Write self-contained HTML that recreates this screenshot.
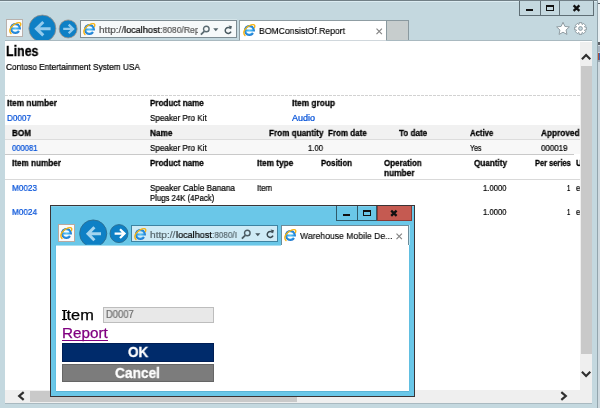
<!DOCTYPE html>
<html><head><meta charset="utf-8"><title>BOMConsistOf.Report</title>
<style>
html,body{margin:0;padding:0;}
body{width:600px;height:408px;overflow:hidden;position:relative;background:#c4d8df;font-family:"Liberation Sans",sans-serif;}
.a{position:absolute;}
.t{position:absolute;white-space:nowrap;transform-origin:0 0;will-change:transform;-webkit-text-stroke:0.24px currentColor;}
.t.b{-webkit-text-stroke:0.3px currentColor;}
svg{position:absolute;overflow:visible;}
</style></head><body>

<!-- ===== main window frame ===== -->
<div class="a" style="left:0;top:0;width:598px;height:1px;background:#717f86;"></div>
<div class="a" style="left:0;top:1px;width:597px;height:1px;background:#dcecf2;"></div>
<div class="a" style="left:597px;top:0;width:1px;height:408px;background:#93a5ad;"></div>
<!-- outside strip -->
<div class="a" style="left:598px;top:0;width:2px;height:408px;background:#cfdae0;"></div>
<div class="a" style="left:598px;top:0;width:2px;height:42px;background:#eaf1f4;"></div>
<div class="a" style="left:598px;top:2.5px;width:2px;height:1.2px;background:#5a6268;"></div>
<div class="a" style="left:598px;top:42.3px;width:2px;height:2.4px;background:#5c6066;"></div>
<div class="a" style="left:598px;top:44.7px;width:2px;height:1.5px;background:#d5dce2;"></div>
<div class="a" style="left:598px;top:46.2px;width:2px;height:6.3px;background:#a9b5c1;"></div>
<div class="a" style="left:598px;top:52.5px;width:1px;height:7px;background:#b85030;"></div>
<div class="a" style="left:599px;top:52.5px;width:1px;height:7px;background:#3565c0;"></div>
<div class="a" style="left:598px;top:59.5px;width:2px;height:2px;background:#9aa6b0;"></div>
<!-- window control buttons -->
<div class="a" style="left:519px;top:1px;width:75px;height:15px;border:1px solid #5f6e75;border-top:none;box-sizing:border-box;background:#c4d8df;"></div>
<div class="a" style="left:540px;top:1px;width:1px;height:15px;background:#5f6e75;"></div>
<div class="a" style="left:559px;top:1px;width:1px;height:15px;background:#5f6e75;"></div>
<div class="a" style="left:525.5px;top:8.8px;width:7.8px;height:2.4px;background:#111;"></div>
<div class="a" style="left:546px;top:5px;width:7.8px;height:6.3px;border:1.8px solid #111;border-top-width:2.2px;box-sizing:border-box;"></div>
<svg style="left:571px;top:4px;" width="10" height="8" viewBox="0 0 10 8"><path d="M2.6 1.4 L8.4 6.9 M8.4 1.4 L2.6 6.9" stroke="#111" stroke-width="2.3" fill="none"/></svg>

<!-- favourites star / gear -->
<svg style="left:555.8px;top:21.6px;" width="14" height="14" viewBox="-7 -7 14 14"><path d="M0.00 -6.70 L1.88 -2.59 L6.37 -2.07 L3.04 0.99 L3.94 5.42 L0.00 3.20 L-3.94 5.42 L-3.04 0.99 L-6.37 -2.07 L-1.88 -2.59 Z" fill="#fff" stroke="#87939a" stroke-width="0.9" stroke-linejoin="round"/></svg>
<svg style="left:574.4px;top:21.6px;" width="13" height="13" viewBox="-6.5 -6.5 13 13">
 <path d="M-1.37 -4.29 L-1.43 -5.83 L1.43 -5.83 L1.37 -4.29 L2.06 -4.00 L3.11 -5.13 L5.13 -3.11 L4.00 -2.06 L4.29 -1.37 L5.83 -1.43 L5.83 1.43 L4.29 1.37 L4.00 2.06 L5.13 3.11 L3.11 5.13 L2.06 4.00 L1.37 4.29 L1.43 5.83 L-1.43 5.83 L-1.37 4.29 L-2.06 4.00 L-3.11 5.13 L-5.13 3.11 L-4.00 2.06 L-4.29 1.37 L-5.83 1.43 L-5.83 -1.43 L-4.29 -1.37 L-4.00 -2.06 L-5.13 -3.11 L-3.11 -5.13 L-2.06 -4.00 Z" fill="#fff" stroke="#87939a" stroke-width="0.9" stroke-linejoin="round"/>
 <circle r="1.9" fill="#c4d8df" stroke="#87939a" stroke-width="0.9"/></svg>

<!-- ===== main toolbar ===== -->
<!-- IE icon box -->
<div class="a" style="left:6px;top:19px;width:17px;height:18px;background:#fbfbfb;border:1px solid #b9b1ad;box-sizing:border-box;"></div>
<svg class="ie" style="left:8.8px;top:22.2px;" width="13" height="13" viewBox="0 0 13 13"><use href="#ie"/></svg>
<!-- back button -->
<svg style="left:28px;top:14px;" width="29" height="27" viewBox="0 0 29 27">
 <defs><clipPath id="cb"><rect x="0" y="0" width="29" height="26.3"/></clipPath></defs>
 <g clip-path="url(#cb)"><circle cx="14.35" cy="14.55" r="13.5" fill="#0e80c5" stroke="#9c8f86" stroke-width="0.8"/></g>
 <path d="M22.6 14.7 H8.6 M15.3 8 L8.4 14.7 L15.3 21.4" fill="none" stroke="#93cbed" stroke-width="3"/>
</svg>
<!-- forward button -->
<svg style="left:58px;top:19px;" width="20" height="20" viewBox="0 0 20 20">
 <circle cx="10.15" cy="9.95" r="9" fill="#0e80c5" stroke="#9c8f86" stroke-width="0.8"/>
 <path d="M5.2 9.9 H14.7 M10.7 5.6 L15.1 9.9 L10.7 14.2" fill="none" stroke="#93cbed" stroke-width="2.3" />
</svg>
<!-- address bar -->
<div class="a" id="abar" style="left:80px;top:19.6px;width:157px;height:18.2px;background:#f6f9fa;border:1px solid #7d8c93;box-sizing:border-box;box-shadow:0 -0.8px 0 #d6e6ec;"></div>
<svg style="left:83px;top:23px;" width="13" height="13" viewBox="0 0 13 13"><use href="#ie"/></svg>
<div class="a" style="left:0;top:0;width:197.5px;height:40px;overflow:hidden;"><span class='t' style='left:98.60px;top:23.70px;font-size:9.6px;line-height:12px;font-weight:normal;color:#585858;transform:scaleX(1.0500);'>http://</span>
<span class='t' style='left:124.00px;top:23.70px;font-size:9.6px;line-height:12px;font-weight:normal;color:#000;transform:scaleX(0.9505);-webkit-text-stroke:0.2px #000;'>localhost</span>
<span class='t' style='left:160.20px;top:23.70px;font-size:9.6px;line-height:12px;font-weight:normal;color:#585858;transform:scaleX(0.8943);'>:8080/Rep</span></div>
<!-- search / dropdown / refresh -->
<svg style="left:199.5px;top:24.8px;" width="11" height="11" viewBox="0 0 11 11"><circle cx="6.3" cy="4" r="2.8" fill="none" stroke="#5b6b72" stroke-width="1.4"/><path d="M4.2 6.3 L0.9 9.7" stroke="#5b6b72" stroke-width="1.8"/></svg>
<svg style="left:213.3px;top:28.2px;" width="6" height="4" viewBox="0 0 6 4"><path d="M0.2 0.3 H5.4 L2.8 3.2 Z" fill="#56666d"/></svg>
<svg style="left:224px;top:25px;" width="9" height="10" viewBox="0 0 9 10"><path d="M6.6 3.6 A3 3 0 1 0 7 6.6" fill="none" stroke="#4a5a61" stroke-width="1.5"/><path d="M4.6 0.6 L8 1.2 L7 4.6 Z" fill="#4f5f66"/></svg>

<!-- tab -->
<div class="a" style="left:239px;top:20px;width:148px;height:21px;background:#fff;border:1px solid #8f9da3;border-bottom:none;box-sizing:border-box;"></div>
<svg style="left:243px;top:24.4px;" width="13" height="13" viewBox="0 0 13 13"><use href="#ie"/></svg>
<svg style="left:376px;top:27.6px;" width="7" height="7" viewBox="0 0 7 7"><path d="M0.5 0.7 L5.9 6.1 M5.9 0.7 L0.5 6.1" stroke="#858585" stroke-width="1.2"/></svg>
<!-- new tab button -->
<div class="a" style="left:386px;top:20px;width:23px;height:20px;background:#c7cdcd;border:1px solid #8a999f;border-bottom:none;box-sizing:border-box;"></div>

<!-- ===== content area ===== -->
<div class="a" style="left:5px;top:40px;width:587px;height:1px;background:#a9b9c0;"></div>
<div class="a" style="left:240px;top:40px;width:146px;height:1px;background:#d0d7dc;"></div>
<div class="a" id="main" style="left:5px;top:41px;width:587px;height:362px;background:#fff;overflow:hidden;">
 <div class="a" style="left:-5px;top:-41px;width:585px;height:431px;overflow:hidden;clip-path:inset(41px 0 0 5px);">
  <!-- dashed line -->
  <div class="a" style="left:5px;top:95px;width:575px;height:1px;background:repeating-linear-gradient(90deg,#d2d2d2 0,#d2d2d2 2.8px,#fff 2.8px,#fff 4px);"></div>
  <!-- grey rows -->
  <div class="a" style="left:5px;top:125px;width:575px;height:14px;background:#f1f1f1;"></div>
  <div class="a" style="left:5px;top:139px;width:575px;height:1px;background:#dcdcdc;"></div>
  <div class="a" style="left:5px;top:140px;width:575px;height:14px;background:#f8f8f8;"></div>
  <div class="a" style="left:5px;top:154px;width:569px;height:1px;background:#c9c9c9;"></div>
  <div class="a" style="left:5px;top:179px;width:575px;height:1px;background:#d9d9d9;"></div>
  <span class='t b' style='left:6.00px;top:43.00px;font-size:13.8px;line-height:17px;font-weight:bold;color:#000;transform:scaleX(0.9016);'>Lines</span>
<span class='t' style='left:6.00px;top:61.80px;font-size:9px;line-height:11px;font-weight:normal;color:#000;transform:scaleX(0.9205);'>Contoso Entertainment System USA</span>
<span class='t b' style='left:7.00px;top:97.90px;font-size:9px;line-height:11px;font-weight:bold;color:#000;transform:scaleX(0.9257);'>Item number</span>
<span class='t b' style='left:150.00px;top:97.90px;font-size:9px;line-height:11px;font-weight:bold;color:#000;transform:scaleX(0.8956);'>Product name</span>
<span class='t b' style='left:292.00px;top:97.90px;font-size:9px;line-height:11px;font-weight:bold;color:#000;transform:scaleX(0.9247);'>Item group</span>
<span class='t' style='left:7.00px;top:112.60px;font-size:9px;line-height:11px;font-weight:normal;color:#0050d8;transform:scaleX(0.9046);'>D0007</span>
<span class='t' style='left:150.00px;top:112.60px;font-size:9px;line-height:11px;font-weight:normal;color:#000;transform:scaleX(0.9003);'>Speaker Pro Kit</span>
<span class='t' style='left:292.00px;top:112.60px;font-size:9px;line-height:11px;font-weight:normal;color:#0050d8;transform:scaleX(0.9986);'>Audio</span>
<span class='t b' style='left:12.00px;top:128.00px;font-size:9px;line-height:11px;font-weight:bold;color:#000;transform:scaleX(0.9048);'>BOM</span>
<span class='t b' style='left:150.00px;top:128.00px;font-size:9px;line-height:11px;font-weight:bold;color:#000;transform:scaleX(0.9178);'>Name</span>
<span class='t b' style='left:268.75px;top:128.00px;font-size:9px;line-height:11px;font-weight:bold;color:#000;transform:scaleX(0.9083);'>From quantity</span>
<span class='t b' style='left:328.00px;top:128.00px;font-size:9px;line-height:11px;font-weight:bold;color:#000;transform:scaleX(0.8905);'>From date</span>
<span class='t b' style='left:399.25px;top:128.00px;font-size:9px;line-height:11px;font-weight:bold;color:#000;transform:scaleX(0.9013);'>To date</span>
<span class='t b' style='left:470.00px;top:128.00px;font-size:9px;line-height:11px;font-weight:bold;color:#000;transform:scaleX(0.8606);'>Active</span>
<span class='t b' style='left:541.25px;top:128.00px;font-size:9px;line-height:11px;font-weight:bold;color:#000;transform:scaleX(0.9163);'>Approved</span>
<span class='t' style='left:12.00px;top:142.90px;font-size:9px;line-height:11px;font-weight:normal;color:#0050d8;transform:scaleX(0.8487);'>000081</span>
<span class='t' style='left:150.00px;top:142.90px;font-size:9px;line-height:11px;font-weight:normal;color:#000;transform:scaleX(0.9003);'>Speaker Pro Kit</span>
<span class='t' style='left:308.00px;top:142.90px;font-size:9px;line-height:11px;font-weight:normal;color:#000;transform:scaleX(0.8556);'>1.00</span>
<span class='t' style='left:470.00px;top:142.90px;font-size:9px;line-height:11px;font-weight:normal;color:#000;transform:scaleX(0.7660);'>Yes</span>
<span class='t' style='left:541.00px;top:142.90px;font-size:9px;line-height:11px;font-weight:normal;color:#000;transform:scaleX(0.8820);'>000019</span>
<span class='t b' style='left:12.00px;top:157.90px;font-size:9px;line-height:11px;font-weight:bold;color:#000;transform:scaleX(0.9071);'>Item number</span>
<span class='t b' style='left:150.00px;top:157.90px;font-size:9px;line-height:11px;font-weight:bold;color:#000;transform:scaleX(0.8956);'>Product name</span>
<span class='t b' style='left:256.50px;top:157.90px;font-size:9px;line-height:11px;font-weight:bold;color:#000;transform:scaleX(0.9174);'>Item type</span>
<span class='t b' style='left:320.75px;top:157.90px;font-size:9px;line-height:11px;font-weight:bold;color:#000;transform:scaleX(0.8732);'>Position</span>
<span class='t b' style='left:384.25px;top:157.90px;font-size:9px;line-height:11px;font-weight:bold;color:#000;transform:scaleX(0.8879);'>Operation</span>
<span class='t b' style='left:384.25px;top:167.80px;font-size:9px;line-height:11px;font-weight:bold;color:#000;transform:scaleX(0.9238);'>number</span>
<span class='t b' style='left:473.75px;top:157.90px;font-size:9px;line-height:11px;font-weight:bold;color:#000;transform:scaleX(0.9037);'>Quantity</span>
<span class='t b' style='left:535.00px;top:157.90px;font-size:9px;line-height:11px;font-weight:bold;color:#000;transform:scaleX(0.8305);'>Per series</span>
<span class='t b' style='left:575.75px;top:157.90px;font-size:9px;line-height:11px;font-weight:bold;color:#000;transform:scaleX(0.8857);'>Unit</span>
<span class='t' style='left:12.00px;top:182.70px;font-size:9px;line-height:11px;font-weight:normal;color:#0050d8;transform:scaleX(0.9081);'>M0023</span>
<span class='t' style='left:150.00px;top:182.70px;font-size:9px;line-height:11px;font-weight:normal;color:#000;transform:scaleX(0.9132);'>Speaker Cable Banana</span>
<span class='t' style='left:150.00px;top:192.60px;font-size:9px;line-height:11px;font-weight:normal;color:#000;transform:scaleX(0.8619);'>Plugs 24K (4Pack)</span>
<span class='t' style='left:256.75px;top:182.70px;font-size:9px;line-height:11px;font-weight:normal;color:#000;transform:scaleX(0.8564);'>Item</span>
<span class='t' style='left:483.20px;top:182.70px;font-size:9px;line-height:11px;font-weight:normal;color:#000;transform:scaleX(0.8536);'>1.0000</span>
<span class='t' style='left:567.20px;top:182.70px;font-size:9px;line-height:11px;font-weight:normal;color:#000;transform:scaleX(0.6579);'>1</span>
<span class='t' style='left:576.00px;top:182.70px;font-size:9px;line-height:11px;font-weight:normal;color:#000;transform:scaleX(0.8487);'>ea</span>
<span class='t' style='left:12.00px;top:206.80px;font-size:9px;line-height:11px;font-weight:normal;color:#0050d8;transform:scaleX(0.9081);'>M0024</span>
<span class='t' style='left:483.20px;top:206.80px;font-size:9px;line-height:11px;font-weight:normal;color:#000;transform:scaleX(0.8536);'>1.0000</span>
<span class='t' style='left:567.20px;top:206.80px;font-size:9px;line-height:11px;font-weight:normal;color:#000;transform:scaleX(0.6579);'>1</span>
<span class='t' style='left:576.00px;top:206.80px;font-size:9px;line-height:11px;font-weight:normal;color:#000;transform:scaleX(0.8487);'>ea</span>
 </div>
</div>
<!-- vertical scrollbar -->
<div class="a" style="left:580px;top:42px;width:12px;height:348px;background:#efefef;"></div>
<div class="a" style="left:581px;top:66.3px;width:10.6px;height:288px;background:#c9c9c9;"></div>
<svg style="left:581px;top:53.2px;" width="10" height="7" viewBox="0 0 10 7"><path d="M0.9 6.2 L5.1 1.9 L9.3 6.2" fill="none" stroke="#2e2e2e" stroke-width="2.1"/></svg>
<svg style="left:581px;top:370.8px;" width="10" height="7" viewBox="0 0 10 7"><path d="M0.9 0.8 L5.1 5.1 L9.3 0.8" fill="none" stroke="#2e2e2e" stroke-width="2.1"/></svg>
<!-- horizontal scrollbar -->
<div class="a" style="left:5px;top:390px;width:587px;height:13px;background:#efefef;"></div>
<div class="a" style="left:30.1px;top:391.3px;width:266.6px;height:10.3px;background:#c9c9c9;"></div>
<svg style="left:17px;top:391.4px;" width="8" height="10" viewBox="0 0 8 10"><path d="M6.7 1.1 L2.2 5 L6.7 8.9" fill="none" stroke="#2e2e2e" stroke-width="2.2"/></svg>
<svg style="left:560px;top:391.4px;" width="8" height="10" viewBox="0 0 8 10"><path d="M1.3 1.1 L5.8 5 L1.3 8.9" fill="none" stroke="#2e2e2e" stroke-width="2.2"/></svg>
<div class="a" style="left:5px;top:403px;width:587px;height:0.6px;background:#a9b9c0;"></div>

<!-- ===== popup window ===== -->
<div class="a" id="pop" style="left:50px;top:205px;width:365px;height:192px;background:#6ac7e8;border:1px solid #3a3436;box-sizing:border-box;"></div>
<div class="a" style="left:51px;top:206px;width:363px;height:1px;background:#7fd0ec;"></div>
<!-- popup window controls -->
<div class="a" style="left:336px;top:206px;width:41px;height:14.5px;border:1px solid #2f5a6a;border-top:none;box-sizing:border-box;"></div>
<div class="a" style="left:356.5px;top:206px;width:1px;height:14px;background:#2f5a6a;"></div>
<div class="a" style="left:376.5px;top:206px;width:35px;height:14.5px;background:#c55a51;border:1px solid #8a3a34;border-top:none;box-sizing:border-box;"></div>
<div class="a" style="left:342.5px;top:213.8px;width:7.8px;height:2.4px;background:#111;"></div>
<div class="a" style="left:363px;top:210.2px;width:7.8px;height:6.1px;border:1.8px solid #111;border-top-width:2.2px;box-sizing:border-box;"></div>
<svg style="left:389.5px;top:209px;" width="10" height="8" viewBox="0 0 10 8"><path d="M1.2 1.6 L6.6 6.8 M6.6 1.6 L1.2 6.8" stroke="#111" stroke-width="2.3" fill="none"/></svg>
<!-- popup toolbar -->
<div class="a" style="left:57.5px;top:224px;width:17.5px;height:17.5px;background:#fbfbfb;border:1px solid #b9a9a0;box-sizing:border-box;"></div>
<svg style="left:60px;top:227px;" width="13" height="13" viewBox="0 0 13 13"><use href="#ie"/></svg>
<svg style="left:79px;top:219px;" width="30" height="26" viewBox="0 0 30 26">
 <defs><clipPath id="cb2"><rect x="0" y="0" width="30" height="25.8"/></clipPath></defs>
 <g clip-path="url(#cb2)"><circle cx="14.2" cy="14.5" r="13.55" fill="#0e80c5" stroke="#2b6c8e" stroke-width="0.9"/></g>
 <path d="M22 14.7 H9.2 M15.4 8.2 L9 14.7 L15.4 21.2" fill="none" stroke="#a5d5ef" stroke-width="3"/>
</svg>
<svg style="left:109.1px;top:223.8px;" width="20" height="20" viewBox="0 0 20 20">
 <circle cx="10" cy="9.6" r="9" fill="#0e80c5" stroke="#2b6c8e" stroke-width="0.9"/>
 <path d="M5.6 9.6 H15 M11 5.2 L15.5 9.6 L11 14" fill="none" stroke="#ffffff" stroke-width="2.3"/>
</svg>
<div class="a" id="pbar" style="left:131px;top:225px;width:146.5px;height:17.3px;background:#cfebf6;border:1px solid #3f84a2;box-sizing:border-box;"></div>
<svg style="left:134.3px;top:227.5px;" width="13" height="13" viewBox="0 0 13 13"><use href="#ie"/></svg>
<div class="a" style="left:0;top:200px;width:236.5px;height:50px;overflow:hidden;"><div class="a" style="left:0;top:-200px;"><span class='t' style='left:150.00px;top:228.60px;font-size:9.6px;line-height:12px;font-weight:normal;color:#5a6a70;transform:scaleX(1.0583);'>http://</span>
<span class='t' style='left:175.60px;top:228.60px;font-size:9.6px;line-height:12px;font-weight:normal;color:#000;transform:scaleX(0.9452);-webkit-text-stroke:0.2px #000;'>localhost</span>
<span class='t' style='left:211.60px;top:228.60px;font-size:9.6px;line-height:12px;font-weight:normal;color:#5a6a70;transform:scaleX(0.8520);'>:8080/I</span></div></div>
<svg style="left:240.6px;top:229px;" width="11" height="11" viewBox="0 0 11 11"><circle cx="6.3" cy="4" r="2.8" fill="none" stroke="#4b5b62" stroke-width="1.4"/><path d="M4.2 6.3 L0.9 9.7" stroke="#4b5b62" stroke-width="1.8"/></svg>
<svg style="left:255.3px;top:232.8px;" width="6" height="4" viewBox="0 0 6 4"><path d="M0.2 0.3 H5.4 L2.8 3.2 Z" fill="#46565d"/></svg>
<svg style="left:265.8px;top:229.2px;" width="9" height="10" viewBox="0 0 9 10"><path d="M6.6 3.6 A3 3 0 1 0 7 6.6" fill="none" stroke="#3a4a51" stroke-width="1.5"/><path d="M4.6 0.6 L8 1.2 L7 4.6 Z" fill="#3f4f56"/></svg>
<!-- popup tab -->
<div class="a" style="left:280.5px;top:225px;width:128px;height:20.4px;background:#fff;border:1px solid #6d8c9a;border-bottom:none;box-sizing:border-box;"></div>
<div class="a" style="left:408.5px;top:225px;width:1px;height:20px;background:#b5e3f3;"></div>
<svg style="left:284.4px;top:228.6px;" width="13" height="13" viewBox="0 0 13 13"><use href="#ie"/></svg>
<svg style="left:396.2px;top:232.6px;" width="7" height="7" viewBox="0 0 7 7"><path d="M0.5 0.7 L5.9 6.1 M5.9 0.7 L0.5 6.1" stroke="#858585" stroke-width="1.2"/></svg>
<!-- popup content -->
<div class="a" style="left:56px;top:245.4px;width:353px;height:145.6px;background:#fff;box-shadow:0 0.7px 0 #55aed2, -0.6px 0 0 #5cb9dc, 0.6px 0 0 #5cb9dc;"></div>
<div class="a" style="left:56px;top:244.6px;width:225px;height:0.8px;background:#a9dff2;"></div>
<!-- form -->
<div class="a" style="left:103px;top:307px;width:111px;height:15.5px;background:#e8e8e8;border:1px solid #bdbdbd;box-sizing:border-box;"></div>
<div class="a" style="left:62px;top:339.5px;width:45.5px;height:1.2px;background:#800080;"></div>
<div class="a" style="left:62px;top:343.2px;width:151.7px;height:18.4px;background:#002b6b;border:1px solid #001e55;box-sizing:border-box;"></div>
<div class="a" style="left:62px;top:363.7px;width:151.7px;height:18px;background:#7c7c7c;border:1px solid #666;box-sizing:border-box;"></div>
<span class='t' style='left:258.60px;top:24.60px;font-size:9.6px;line-height:12px;font-weight:normal;color:#000;transform:scaleX(0.9011);-webkit-text-stroke:0.15px #000;'>BOMConsistOf.Report</span>
<span class='t' style='left:299.60px;top:229.60px;font-size:9.6px;line-height:12px;font-weight:normal;color:#000;transform:scaleX(0.9009);-webkit-text-stroke:0.15px #000;'>Warehouse Mobile De...</span>
<span class='t' style='left:62.00px;top:307.00px;font-size:14.2px;line-height:17px;font-weight:normal;color:#000;transform:scaleX(1.1524);-webkit-text-stroke:0.25px #000;'>Item</span>
<span class='t' style='left:106.00px;top:309.30px;font-size:10.2px;line-height:12px;font-weight:normal;color:#707070;transform:scaleX(0.9257);'>D0007</span>
<span class='t' style='left:62.00px;top:324.50px;font-size:14px;line-height:17px;font-weight:normal;color:#800080;transform:scaleX(1.0885);-webkit-text-stroke:0.25px #800080;'>Report</span>
<span class='t b' style='left:127.60px;top:343.00px;font-size:14.6px;line-height:18px;font-weight:bold;color:#fff;transform:scaleX(0.9273);'>OK</span>
<span class='t b' style='left:115.00px;top:363.70px;font-size:14.6px;line-height:18px;font-weight:bold;color:#fff;transform:scaleX(0.9403);'>Cancel</span>
<div class="a" style="left:62px;top:310.2px;width:4.6px;height:1.2px;background:#000;"></div>
<div class="a" style="left:62px;top:318.8px;width:4.6px;height:1.2px;background:#000;"></div>

<!-- IE icon symbol -->
<svg width="0" height="0" style="position:absolute"><defs>
 <radialGradient id="ieg" gradientUnits="userSpaceOnUse" cx="6.4" cy="6.5" r="6.2"><stop offset="0" stop-color="#5cc8f6"/><stop offset="0.55" stop-color="#2e9ce6"/><stop offset="1" stop-color="#1464c0"/></radialGradient>
 <g id="ie">
  <path d="M2 6.5 H10.8 A4.4 4.4 0 1 0 10 9" fill="none" stroke="url(#ieg)" stroke-width="2.2"/>
  <path d="M2 11.4 C0.6 10 0.4 8 1.9 5.7 C3.3 3.5 5.7 1.7 8.1 0.95 C10 0.35 11.45 0.6 11.75 1.7 C11.9 2.4 11.7 3 11.4 3.6" fill="none" stroke="#f7b414" stroke-width="1.4" stroke-linecap="round"/>
 </g></defs></svg>
</body></html>
